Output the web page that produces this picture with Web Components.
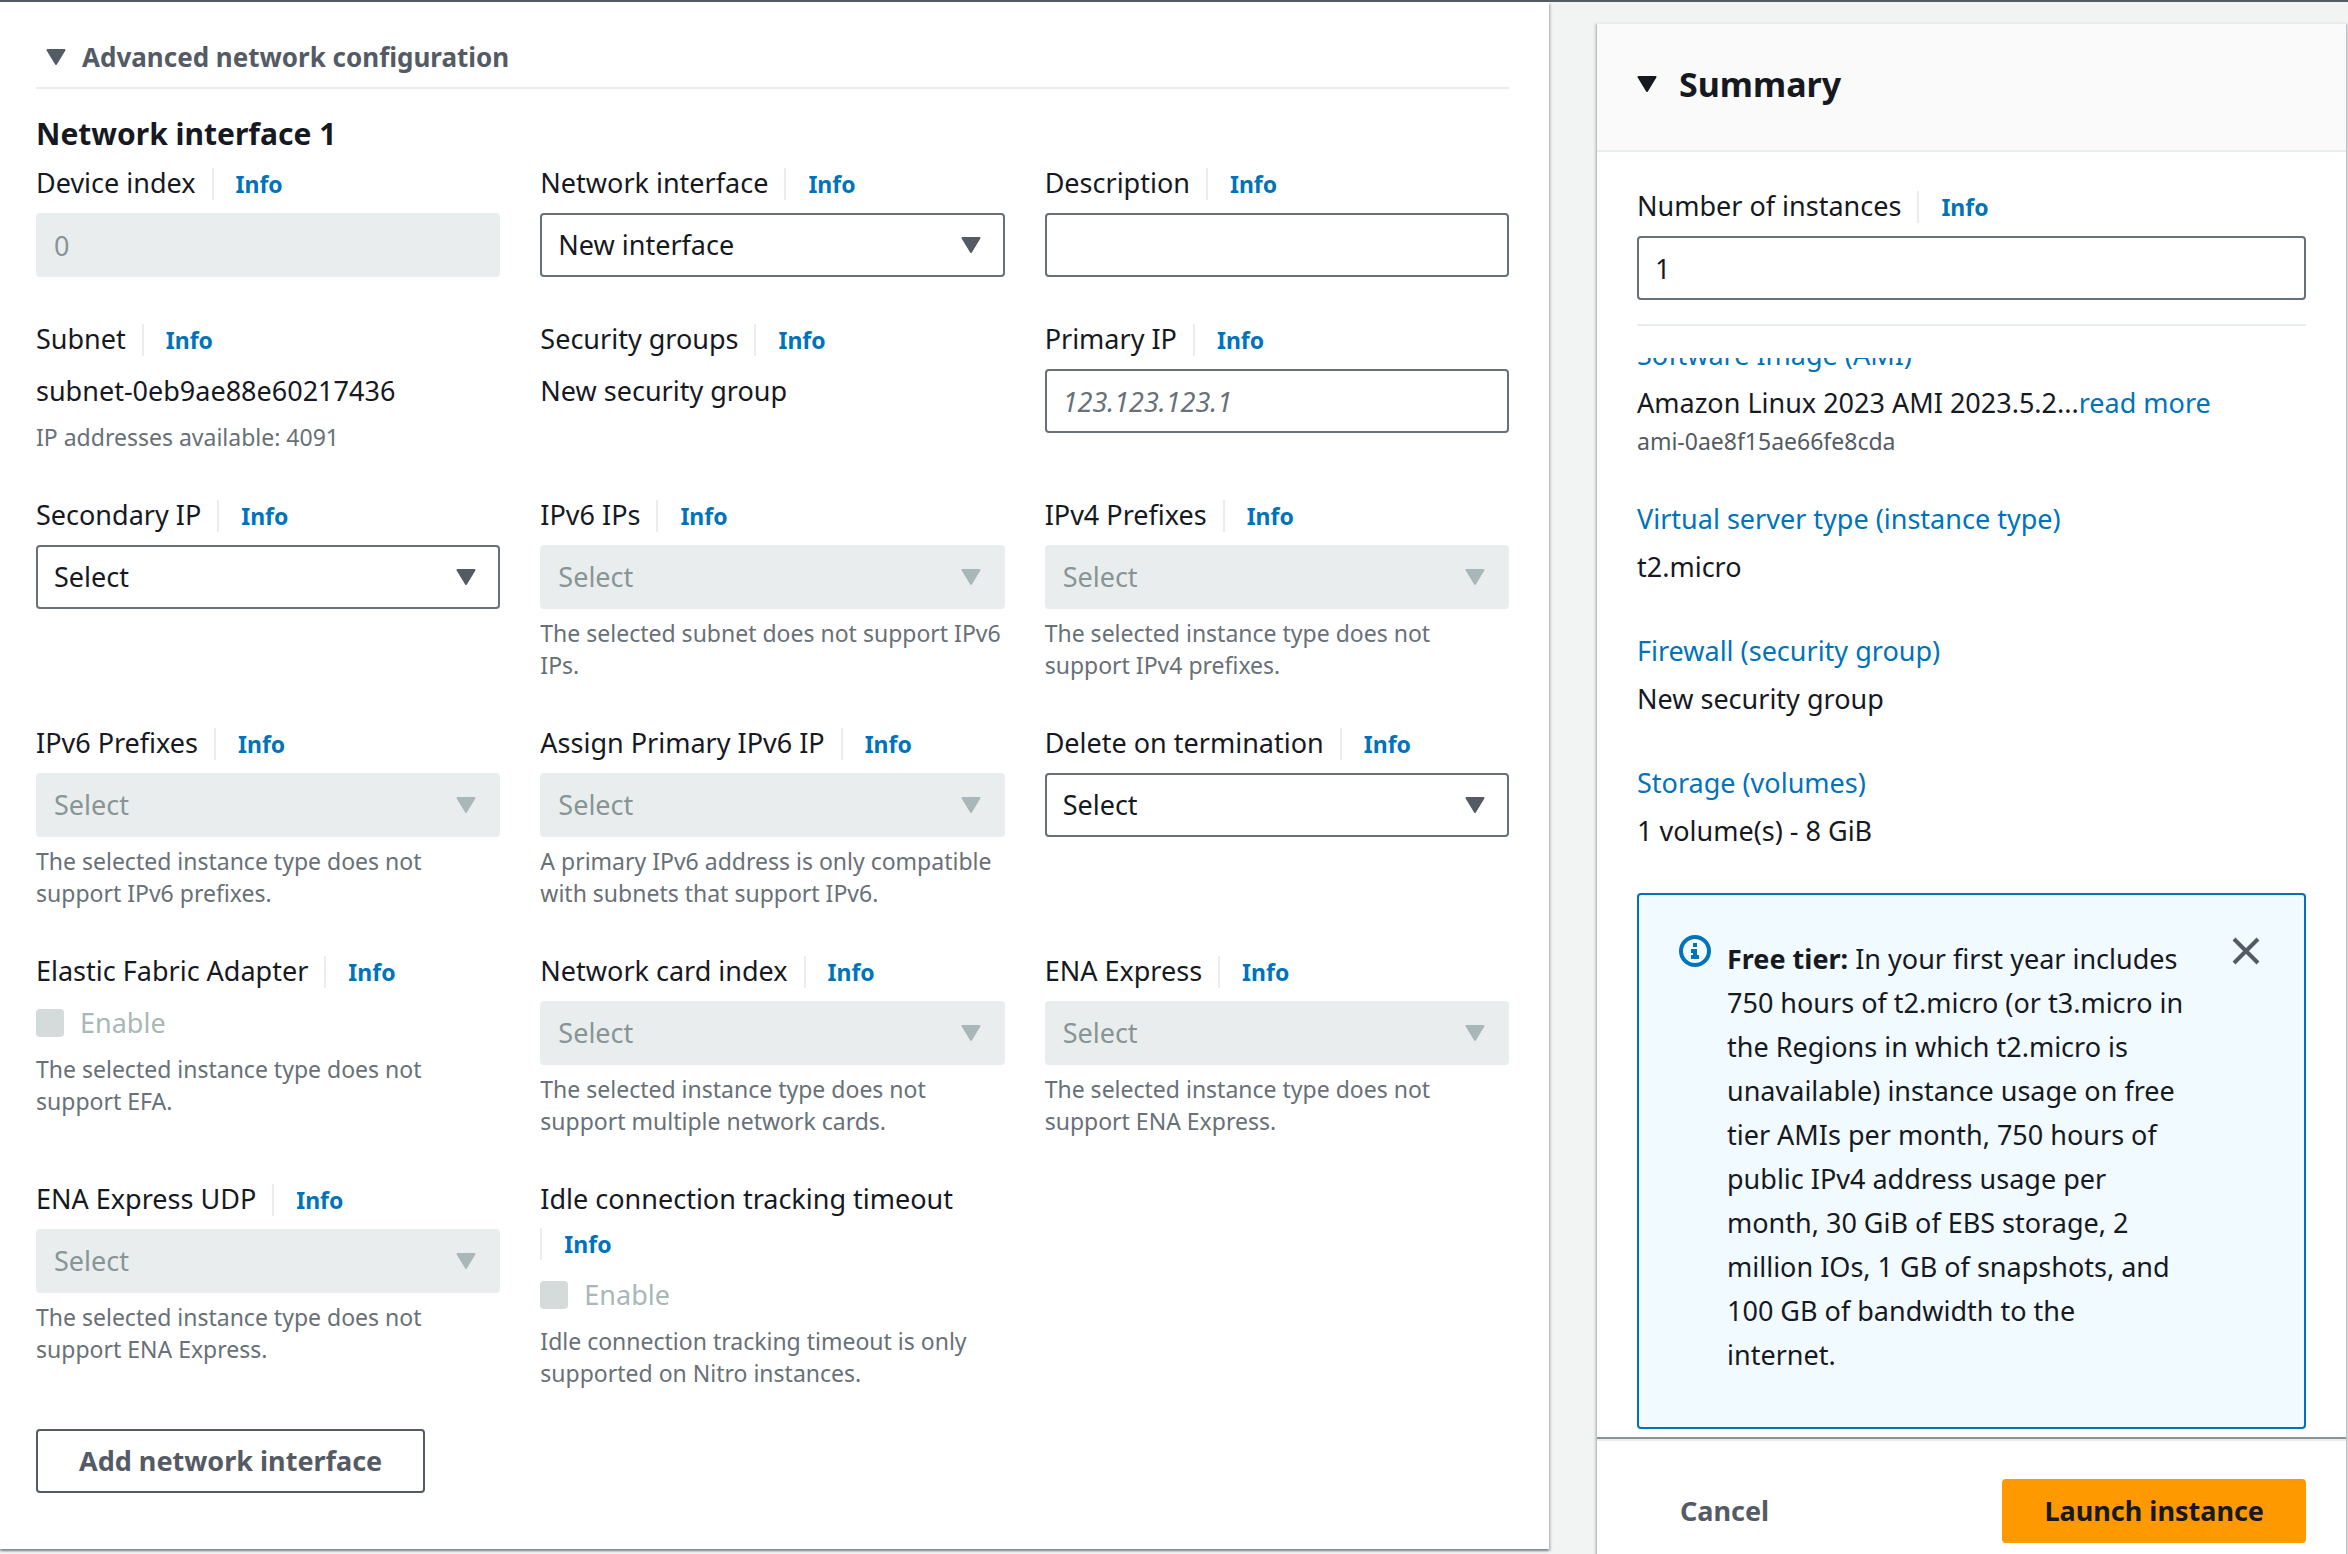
<!DOCTYPE html>
<html lang="en">
<head>
<meta charset="utf-8">
<title>Launch an instance</title>
<style>
  html, body { margin: 0; height: 100%; }
  body { background: #f2f3f3; color: #16191f; font: 27px/44px "Noto Sans", sans-serif; overflow: hidden; }
</style>
</head>
<body>
<launch-page>
  <network-panel slot="main">
    <form-field label="Device index" type="text" value="0" disabled></form-field>
    <form-field label="Network interface" type="select" value="New interface"></form-field>
    <form-field label="Description" type="text"></form-field>

    <form-field label="Subnet" help="IP addresses available: 4091">subnet-0eb9ae88e60217436</form-field>
    <form-field label="Security groups">New security group</form-field>
    <form-field label="Primary IP" type="text" placeholder="123.123.123.1"></form-field>

    <form-field label="Secondary IP" type="select" value="Select"></form-field>
    <form-field label="IPv6 IPs" type="select" value="Select" disabled help="The selected subnet does not support IPv6 IPs."></form-field>
    <form-field label="IPv4 Prefixes" type="select" value="Select" disabled help="The selected instance type does not support IPv4 prefixes."></form-field>

    <form-field label="IPv6 Prefixes" type="select" value="Select" disabled help="The selected instance type does not support IPv6 prefixes."></form-field>
    <form-field label="Assign Primary IPv6 IP" type="select" value="Select" disabled help="A primary IPv6 address is only compatible with subnets that support IPv6."></form-field>
    <form-field label="Delete on termination" type="select" value="Select"></form-field>

    <form-field label="Elastic Fabric Adapter" type="check" value="Enable" disabled help="The selected instance type does not support EFA."></form-field>
    <form-field label="Network card index" type="select" value="Select" disabled help="The selected instance type does not support multiple network cards."></form-field>
    <form-field label="ENA Express" type="select" value="Select" disabled help="The selected instance type does not support ENA Express."></form-field>

    <form-field label="ENA Express UDP" type="select" value="Select" disabled help="The selected instance type does not support ENA Express."></form-field>
    <form-field label="Idle connection tracking timeout" type="check" value="Enable" disabled help="Idle connection tracking timeout is only supported on Nitro instances."></form-field>
  </network-panel>

  <summary-panel slot="side">
    <form-field slot="count" label="Number of instances" type="text" value="1"></form-field>
    <summary-item name="Software Image (AMI)" note="ami-0ae8f15ae66fe8cda" more="read more">Amazon Linux 2023 AMI 2023.5.2...</summary-item>
    <summary-item name="Virtual server type (instance type)">t2.micro</summary-item>
    <summary-item name="Firewall (security group)">New security group</summary-item>
    <summary-item name="Storage (volumes)">1 volume(s) - 8 GiB</summary-item>
    <info-alert><b>Free tier:</b> In your first year includes 750 hours of t2.micro (or t3.micro in the Regions in which t2.micro is unavailable) instance usage on free tier AMIs per month, 750 hours of public IPv4 address usage per month, 30 GiB of EBS storage, 2 million IOs, 1 GB of snapshots, and 100 GB of bandwidth to the internet.</info-alert>
    <ui-button slot="footer" variant="link">Cancel</ui-button>
    <ui-button slot="footer" variant="primary">Launch instance</ui-button>
  </summary-panel>
</launch-page>

<script>
  const CARET = `<svg class="caret" viewBox="0 0 20 16" width="20" height="16" aria-hidden="true"><path d="M1.5 1h17L10 15z" fill="currentColor" stroke="currentColor" stroke-width="2" stroke-linejoin="round"/></svg>`;
  const BASE = `*, *::before { box-sizing: border-box; } a { color: #0073bb; text-decoration: none; } button, input, select { font: inherit; margin: 0; }`;
  const SHADOW = `box-shadow: 0 2px 2px rgba(0,28,36,.3), 2px 2px 2px rgba(0,28,36,.15), -2px 2px 2px rgba(0,28,36,.15);`;

  function define(name, render, after) {
    customElements.define(name, class extends HTMLElement {
      connectedCallback() {
        if (this.shadowRoot) return;
        this.attachShadow({ mode: "open" }).innerHTML = render(this);
        if (after) after(this, this.shadowRoot);
      }
    });
  }

  define("launch-page", () => `
    <style>${BASE}
      :host { display: grid; grid-template-columns: minmax(0, 1549fr) minmax(0, 749fr); column-gap: 48px;
        align-items: start; height: 100vh; overflow: hidden; padding-right: 2px; border-top: 2px solid #545b64; box-sizing: border-box; }
    </style>
    <slot name="main"></slot><slot name="side"></slot>`);

  define("network-panel", () => `
    <style>${BASE}
      :host { display: block; background: #fff; padding: 33px 40px 56px 36px; ${SHADOW} }
      .toggle { display: flex; align-items: center; gap: 16px; width: 100%; border: 0; border-bottom: 2px solid #eaeded;
        background: none; color: #545b64; font-size: 26px; font-weight: 700; text-align: left; padding: 0 0 8px 10px; }
      h3 { margin: 21px 0 3px; font-size: 30px; line-height: 48px; }
      .grid { display: grid; grid-template-columns: repeat(3, minmax(0, 1fr)); gap: 40px; margin-bottom: 40px; }
    </style>
    <button class="toggle" aria-expanded="true">${CARET}<span>Advanced network configuration</span></button>
    <h3>Network interface 1</h3>
    <div class="grid"><slot></slot></div>
    <ui-button>Add network interface</ui-button>`);

  define("form-field", el => {
    const type = el.getAttribute("type");
    const value = el.getAttribute("value") || "";
    const help = el.getAttribute("help");
    const off = el.hasAttribute("disabled") ? "disabled" : "";
    const label = el.getAttribute("label");
    const control = {
      text: `<input id="c" class="box" type="text" value="${value}" placeholder="${el.getAttribute("placeholder") || ""}" ${off}>`,
      select: `<div class="pick"><select id="c" class="box" ${off}><option>${value}</option></select>${CARET}</div>`,
      check: `<label class="check"><input type="checkbox" ${off}>${value}</label>`
    }[type] || `<div><slot></slot></div>`;
    const caption = type === "text" || type === "select" ? `<label for="c">${label}</label>` : `<span>${label}</span>`;
    return `
    <style>${BASE}
      :host { display: flex; flex-direction: column; gap: 8px; }
      .head { display: flex; flex-wrap: wrap; align-items: baseline; }
      .head > :first-child { padding-right: 16px; }
      .head a { margin: 7px 0 5px; border-left: 2px solid #eaeded; padding-left: 22px; font-size: 23px; line-height: 32px; font-weight: 700; }
      .box { display: block; width: 100%; height: 64px; padding: 0 16px; border: 2px solid #687078; border-radius: 4px;
        background: #fff; color: #16191f; appearance: none; line-height: 44px; }
      .box:disabled { background: #eaeded; border-color: #eaeded; color: #879596; opacity: 1; }
      .box::placeholder { color: #687078; font-style: italic; opacity: 1; }
      .pick { display: grid; align-items: center; color: #545b64; }
      .pick > * { grid-area: 1 / 1; }
      .caret { justify-self: end; margin-right: 24px; pointer-events: none; }
      .box:disabled + .caret { color: #aab7b8; }
      .check { display: flex; align-items: center; gap: 16px; color: #aab7b8; }
      .check input { appearance: none; width: 28px; height: 28px; border-radius: 4px; background: #d5dbdb; }
      .help { color: #687078; font-size: 23px; line-height: 32px; }
    </style>
    <div class="head">${caption}<a href="#info">Info</a></div>
    ${control}
    ${help ? `<div class="help">${help}</div>` : ""}`;
  });

  define("ui-button", el => `
    <style>${BASE}
      :host { display: inline-flex; }
      button { height: 64px; padding: 0 41px; border: 2px solid #545b64; border-radius: 4px; background: #fff; color: #545b64; font-weight: 700; }
      .primary { padding: 0 40px; background: #ff9900; border-color: #ff9900; color: #16191f; }
      .link { border-color: transparent; background: none; }
    </style>
    <button class="${el.getAttribute("variant") || "normal"}"><slot></slot></button>`);

  define("summary-item", el => `
    <style>${BASE}
      :host { display: block; }
      .value { margin-top: 4px; }
      .note { color: #545b64; font-size: 23px; line-height: 32px; }
    </style>
    <a href="#edit">${el.getAttribute("name")}</a>
    <div class="value"><slot></slot>${el.hasAttribute("more") ? `<a href="#more">${el.getAttribute("more")}</a>` : ""}</div>
    ${el.hasAttribute("note") ? `<div class="note">${el.getAttribute("note")}</div>` : ""}`);

  define("info-alert", () => `
    <style>${BASE}
      :host { display: flex; align-items: flex-start; box-sizing: border-box; padding: 40px 42px 50px 40px;
        border: 2px solid #0073bb; border-radius: 4px; background: #f1faff; }
      svg { display: block; flex: none; }
      .text { flex: 1; min-width: 0; padding: 2px 42px 0 16px; }
      button { border: 0; padding: 0; background: none; }
    </style>
    <svg width="32" height="32" viewBox="0 0 32 32" aria-hidden="true">
      <circle cx="16" cy="16" r="14" fill="none" stroke="#0073bb" stroke-width="4"/>
      <path d="M14 8h4v4h-4zM12 14h6v6h2v4h-8v-4h2v-2h-2z" fill="#0073bb"/></svg>
    <div class="text"><slot></slot></div>
    <button aria-label="Dismiss"><svg width="32" height="32" viewBox="0 0 32 32" fill="none" stroke="#545b64" stroke-width="4"><path d="M4 4l24 24M28 4L4 28"/></svg></button>`);

  define("summary-panel", () => `
    <style>${BASE}
      :host { display: block; margin-top: 20px; background: #fff; border-top: 2px solid #eaeded; ${SHADOW} }
      header { background: #fafafa; border-bottom: 2px solid #eaeded; padding: 36px 40px 42px; }
      header button { display: flex; align-items: center; gap: 22px; border: 0; background: none; padding: 0; color: inherit; }
      h2 { margin: 0; font-size: 34px; line-height: 48px; }
      .count { padding: 32px 0 24px; margin: 0 40px 32px; border-bottom: 2px solid #eaeded; }
      .scroll { max-height: calc(100vh - 475px); overflow-y: auto; scrollbar-width: none; padding: 0 40px; }
      .list { display: flex; flex-direction: column; gap: 40px; padding-bottom: 40px; }
      footer { display: flex; justify-content: space-between; padding: 40px; border-top: 2px solid #879596; box-shadow: inset 0 2px #eaeded; }
    </style>
    <header><button aria-expanded="true">${CARET}<h2>Summary</h2></button></header>
    <div class="count"><slot name="count"></slot></div>
    <div class="scroll"><div class="list"><slot></slot></div></div>
    <footer><slot name="footer"></slot></footer>`,
    (el, root) => requestAnimationFrame(() => { root.querySelector(".scroll").scrollTop = 25; }));
</script>
</body>
</html>
